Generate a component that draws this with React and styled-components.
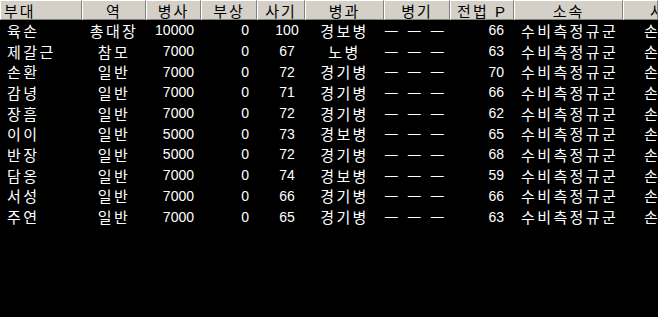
import React from "react";
import styled, { createGlobalStyle } from "styled-components";

const GlobalStyle = createGlobalStyle`
  html, body {
    margin: 0;
    padding: 0;
    background: #000;
  }
  body {
    font-family: "Liberation Sans", "Noto Sans CJK KR", sans-serif;
  }
`;

const COLS = "82px 64px 55px 56px 48px 79px 66px 64px 109px 35px";

const StyledTable = styled.div`
  width: 658px;
  height: 317px;
  background: #000;
  overflow: hidden;
`;

const HeaderRow = styled.div`
  display: grid;
  grid-template-columns: ${COLS};
  height: 20px;
  background: #d4d0c8;
`;

const HeaderCell = styled.div`
  box-sizing: border-box;
  height: 20px;
  border-top: 1px solid #fff;
  border-left: 1px solid #fff;
  border-right: 1px solid #808080;
  border-bottom: 1px solid #808080;
  box-shadow: 1px 0 0 #404040;
  display: flex;
  align-items: center;
  justify-content: ${(p) => (p.$left ? "flex-start" : "center")};
  padding-left: ${(p) => p.$pl || 0}px;
  font-size: 15px;
  letter-spacing: 2px;
  color: #000;
  white-space: nowrap;
  overflow: hidden;
`;

const Row = styled.div`
  display: grid;
  grid-template-columns: ${COLS};
  height: 20.7px;
  color: #fff;
`;

const Cell = styled.div`
  display: flex;
  align-items: center;
  justify-content: ${(p) =>
    p.$align === "right" ? "flex-end" : p.$align === "center" ? "center" : "flex-start"};
  padding-left: ${(p) => p.$pl || 0}px;
  padding-right: ${(p) => p.$pr || 0}px;
  font-size: ${(p) => (p.$num ? "14px" : "15px")};
  letter-spacing: ${(p) => (p.$num ? "0" : "2.4px")};
  white-space: nowrap;
  overflow: hidden;
`;

const Dashes = styled(Cell)`
  font-family: "Noto Sans CJK KR", sans-serif;
  font-size: 13px;
  letter-spacing: 4px;
  transform: scaleX(1.35);
`;

const rows = [
  ["육손", "총대장", "10000", "0", "100", "경보병", "66"],
  ["제갈근", "참모", "7000", "0", "67", "노병", "63"],
  ["손환", "일반", "7000", "0", "72", "경기병", "70"],
  ["감녕", "일반", "7000", "0", "71", "경기병", "66"],
  ["장흠", "일반", "7000", "0", "72", "경기병", "62"],
  ["이이", "일반", "5000", "0", "73", "경보병", "65"],
  ["반장", "일반", "5000", "0", "72", "경기병", "68"],
  ["담옹", "일반", "7000", "0", "74", "경보병", "59"],
  ["서성", "일반", "7000", "0", "66", "경기병", "66"],
  ["주연", "일반", "7000", "0", "65", "경기병", "63"],
];

const headers = ["부대", "역", "병사", "부상", "사기", "병과", "병기", "전법 P", "소속", "사령관"];

function App() {
  return (
    <>
      <GlobalStyle />
      <StyledTable>
        <HeaderRow>
          {headers.map((h, i) => (
            <HeaderCell
              key={h}
              $left={i === 0 || i === 9}
              $pl={i === 0 ? 3 : i === 9 ? 26 : 0}
            >
              {h}
            </HeaderCell>
          ))}
        </HeaderRow>
        {rows.map((r) => (
          <Row key={r[0]}>
            <Cell $pl={7}>{r[0]}</Cell>
            <Cell $align="center">{r[1]}</Cell>
            <Cell $num $align="right" $pr={7}>{r[2]}</Cell>
            <Cell $num $align="right" $pr={8}>{r[3]}</Cell>
            <Cell $num $align="center" $pl={12}>{r[4]}</Cell>
            <Cell $align="center">{r[5]}</Cell>
            <Dashes $align="center">－－－</Dashes>
            <Cell $num $align="right" $pr={10}>{r[6]}</Cell>
            <Cell $pl={7}>수비측정규군</Cell>
            <Cell $pl={21}>손권</Cell>
          </Row>
        ))}
      </StyledTable>
    </>
  );
}

export default App;
